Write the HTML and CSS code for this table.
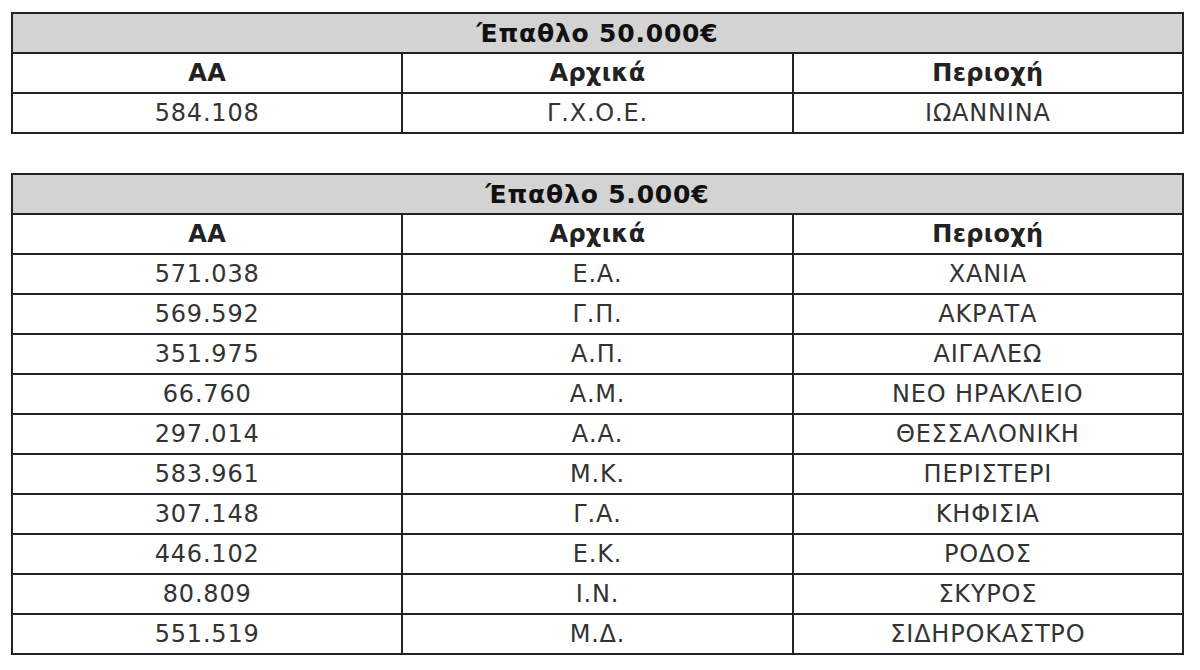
FILE: index.html
```html
<!DOCTYPE html>
<html lang="el">
<head>
    <meta charset="UTF-8">
    <meta name="viewport" content="width=device-width, initial-scale=1.0">
    <title>Έπαθλα</title>
    <link rel="stylesheet" href="styles.css">
</head>
<body>
    <div class="wrap">
        <table class="prize">
            <tr><th class="title" colspan="3">Έπαθλο 50.000€</th></tr>
            <tr><th>AA</th><th>Αρχικά</th><th>Περιοχή</th></tr>
            <tr><td>584.108</td><td>Γ.Χ.Ο.Ε.</td><td>ΙΩΑΝΝΙΝΑ</td></tr>
        </table>
        <table class="prize">
            <tr><th class="title" colspan="3">Έπαθλο 5.000€</th></tr>
            <tr><th>AA</th><th>Αρχικά</th><th>Περιοχή</th></tr>
            <tr><td>571.038</td><td>Ε.Α.</td><td>ΧΑΝΙΑ</td></tr>
            <tr><td>569.592</td><td>Γ.Π.</td><td>ΑΚΡΑΤΑ</td></tr>
            <tr><td>351.975</td><td>Α.Π.</td><td>ΑΙΓΑΛΕΩ</td></tr>
            <tr><td>66.760</td><td>Α.Μ.</td><td>ΝΕΟ ΗΡΑΚΛΕΙΟ</td></tr>
            <tr><td>297.014</td><td>Α.Α.</td><td>ΘΕΣΣΑΛΟΝΙΚΗ</td></tr>
            <tr><td>583.961</td><td>Μ.Κ.</td><td>ΠΕΡΙΣΤΕΡΙ</td></tr>
            <tr><td>307.148</td><td>Γ.Α.</td><td>ΚΗΦΙΣΙΑ</td></tr>
            <tr><td>446.102</td><td>Ε.Κ.</td><td>ΡΟΔΟΣ</td></tr>
            <tr><td>80.809</td><td>Ι.Ν.</td><td>ΣΚΥΡΟΣ</td></tr>
            <tr><td>551.519</td><td>Μ.Δ.</td><td>ΣΙΔΗΡΟΚΑΣΤΡΟ</td></tr>
        </table>
    </div>
</body>
</html>
```

FILE: styles.css
```css
body {
  margin: 0;
  background: #fff;
  font-family: "DejaVu Sans", Verdana, sans-serif;
  color: #333;
}
.wrap {
  padding: 12px 0 0 11px;
  display: flex;
  flex-direction: column;
  gap: 39px;
}
.prize {
  width: 1173px;
  border-collapse: collapse;
  table-layout: fixed;
  border: 2px solid #222;
}
.prize th,
.prize td {
  border: 2px solid #222;
  height: 38px;
  padding: 0;
  text-align: center;
  font-size: 24px;
  font-weight: normal;
  letter-spacing: 0.8px;
}
.prize th {
  font-weight: bold;
  letter-spacing: 0.3px;
  color: #222;
}
.prize .title {
  background: #d3d3d3;
  font-size: 25px;
  letter-spacing: 0.8px;
  color: #111;
}
```
